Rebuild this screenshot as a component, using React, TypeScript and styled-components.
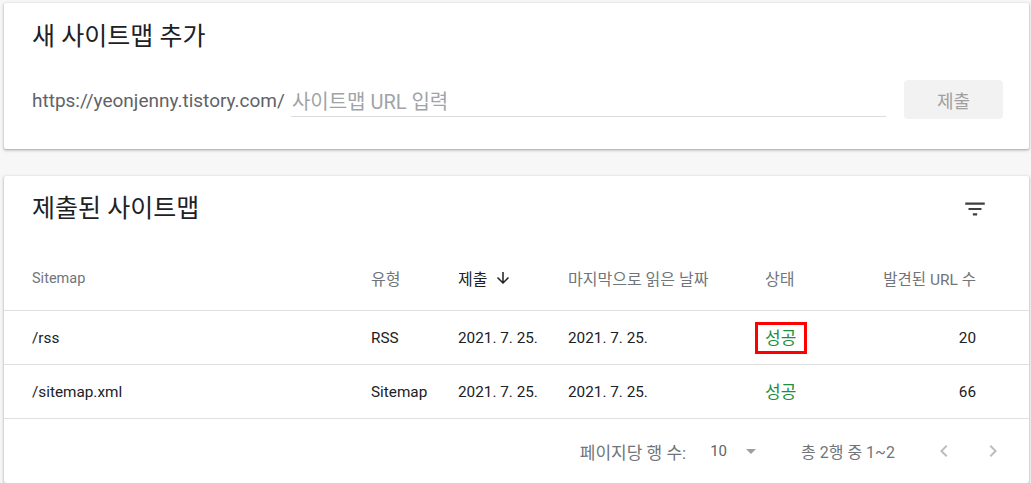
import React from 'react';
import styled, { createGlobalStyle } from 'styled-components';

const GlobalStyle = createGlobalStyle`
    body {
        margin: 0;
        background: #f7f7f7;
        font-family: Roboto, "Noto Sans CJK KR", sans-serif;
        color: #202124;
    }
`;

const Page = styled.div`
    display: flex;
    flex-direction: column;
    gap: 27px;
    padding: 3px 2px 0 4px;
`;

const Card = styled.section`
    background: #fff;
    border-radius: 2px;
    box-shadow: 0 1px 2px rgba(60, 64, 67, 0.3), 0 1px 3px 1px rgba(60, 64, 67, 0.15);
`;

const AddCard = styled(Card)`
    padding: 18px 26px 30px 28px;
`;

const Title = styled.h2`
    margin: 0;
    font-size: 25px;
    font-weight: 400;
    line-height: 32px;
    color: #202124;
`;

const SubmitRow = styled.div`
    display: flex;
    align-items: center;
    margin-top: 27px;
`;

const Prefix = styled.span`
    font-size: 19px;
    color: #5f6368;
    margin-right: 6px;
    padding-top: 2px;
`;

const Field = styled.input`
    flex: 1;
    height: 35px;
    box-sizing: border-box;
    border: none;
    border-bottom: 1px solid #dadce0;
    padding: 5px 0 0 1px;
    font-family: inherit;
    font-size: 20px;
    outline: none;
    background: transparent;
    &::placeholder {
        color: #a0a4a8;
    }
`;

const SubmitButton = styled.button`
    margin-left: 18px;
    width: 99px;
    height: 39px;
    border: none;
    border-radius: 4px;
    background: #f2f2f2;
    color: #a0a0a0;
    font-family: inherit;
    font-size: 18px;
`;

const ListCard = styled(Card)`
    display: flex;
    flex-direction: column;
`;

const ListHead = styled.div`
    height: 70px;
    box-sizing: border-box;
    padding: 17px 41px 0 28px;
    display: flex;
    justify-content: space-between;
    align-items: flex-start;
`;

const FilterButton = styled.span`
    display: flex;
    margin-top: 3px;
    color: #3c4043;
`;

const Row = styled.div<{ $height: number }>`
    display: grid;
    grid-template-columns: 339px 87px 110px 197px 100px 111px;
    align-items: center;
    box-sizing: border-box;
    height: ${(p) => p.$height}px;
    padding: 0 53px 0 28px;
    border-bottom: 1px solid #e0e0e0;
    font-size: 15.3px;
`;

const HeadCell = styled.span<{ $active?: boolean; $right?: boolean; $size?: number }>`
    display: flex;
    align-items: center;
    gap: 7px;
    justify-content: ${(p) => (p.$right ? 'flex-end' : 'flex-start')};
    font-size: ${(p) => p.$size ?? 16}px;
    color: ${(p) => (p.$active ? '#202124' : '#70757a')};
`;

const Cell = styled.span<{ $right?: boolean }>`
    text-align: ${(p) => (p.$right ? 'right' : 'left')};
    color: #202124;
`;

const Status = styled.span<{ $marked?: boolean }>`
    justify-self: start;
    display: inline-block;
    margin-left: -10px;
    padding: 1px 8px 1px 7px;
    border: 3px solid ${(p) => (p.$marked ? '#ff0000' : 'transparent')};
    color: #1e8e3e;
    font-size: 17px;
    line-height: 24px;
`;

const Footer = styled.div`
    height: 64px;
    display: flex;
    align-items: center;
    justify-content: flex-end;
    padding-right: 24px;
    font-size: 16px;
    color: #70757a;
`;

const PerPage = styled.span`
    font-size: 17px;
    margin-right: 24px;
`;

const Select = styled.span`
    display: flex;
    align-items: center;
    gap: 12px;
    font-size: 15px;
    color: #5f6368;
    margin-right: 38px;
`;

const Range = styled.span`
    margin-right: 37px;
`;

const PageButton = styled.span`
    display: flex;
    color: #bdbdbd;
    & + & {
        margin-left: 25px;
    }
`;

const FilterIcon = () => (
    <svg width="26" height="26" viewBox="0 0 24 24" fill="currentColor">
        <path d="M10 18h4v-2h-4v2zM3 6v2h18V6H3zm3 7h12v-2H6v2z" />
    </svg>
);

const ArrowDown = () => (
    <svg width="18" height="18" viewBox="0 0 24 24" fill="#202124">
        <path d="M20 12l-1.41-1.41L13 16.17V4h-2v12.17l-5.58-5.6L4 12l8 8 8-8z" />
    </svg>
);

const DropIcon = () => (
    <svg width="24" height="24" viewBox="0 0 24 24" fill="#9aa0a6">
        <path d="M7 10l5 5 5-5z" />
    </svg>
);

const ChevronLeft = () => (
    <svg width="24" height="24" viewBox="0 0 24 24" fill="currentColor">
        <path d="M15.41 7.41L14 6l-6 6 6 6 1.41-1.41L10.83 12z" />
    </svg>
);

const ChevronRight = () => (
    <svg width="24" height="24" viewBox="0 0 24 24" fill="currentColor">
        <path d="M10 6L8.59 7.41 13.17 12l-4.58 4.59L10 18l6-6z" />
    </svg>
);

const sitemaps = [
    { path: '/rss', type: 'RSS', submitted: '2021. 7. 25.', read: '2021. 7. 25.', count: 20, marked: true },
    { path: '/sitemap.xml', type: 'Sitemap', submitted: '2021. 7. 25.', read: '2021. 7. 25.', count: 66, marked: false },
];

export default function App() {
    return (
        <Page>
            <GlobalStyle />
            <AddCard>
                <Title>새 사이트맵 추가</Title>
                <SubmitRow>
                    <Prefix>https://yeonjenny.tistory.com/</Prefix>
                    <Field placeholder="사이트맵 URL 입력" />
                    <SubmitButton>제출</SubmitButton>
                </SubmitRow>
            </AddCard>

            <ListCard>
                <ListHead>
                    <Title>제출된 사이트맵</Title>
                    <FilterButton>
                        <FilterIcon />
                    </FilterButton>
                </ListHead>
                <Row $height={65}>
                    <HeadCell $size={14.5}>Sitemap</HeadCell>
                    <HeadCell>유형</HeadCell>
                    <HeadCell $active>
                        제출 <ArrowDown />
                    </HeadCell>
                    <HeadCell>마지막으로 읽은 날짜</HeadCell>
                    <HeadCell>상태</HeadCell>
                    <HeadCell $right $size={15.5}>
                        발견된 URL 수
                    </HeadCell>
                </Row>
                {sitemaps.map((s) => (
                    <Row $height={54} key={s.path}>
                        <Cell>{s.path}</Cell>
                        <Cell>{s.type}</Cell>
                        <Cell>{s.submitted}</Cell>
                        <Cell>{s.read}</Cell>
                        <Status $marked={s.marked}>성공</Status>
                        <Cell $right>{s.count}</Cell>
                    </Row>
                ))}
                <Footer>
                    <PerPage>페이지당 행 수:</PerPage>
                    <Select>
                        10 <DropIcon />
                    </Select>
                    <Range>총 2행 중 1~2</Range>
                    <PageButton>
                        <ChevronLeft />
                    </PageButton>
                    <PageButton>
                        <ChevronRight />
                    </PageButton>
                </Footer>
            </ListCard>
        </Page>
    );
}
